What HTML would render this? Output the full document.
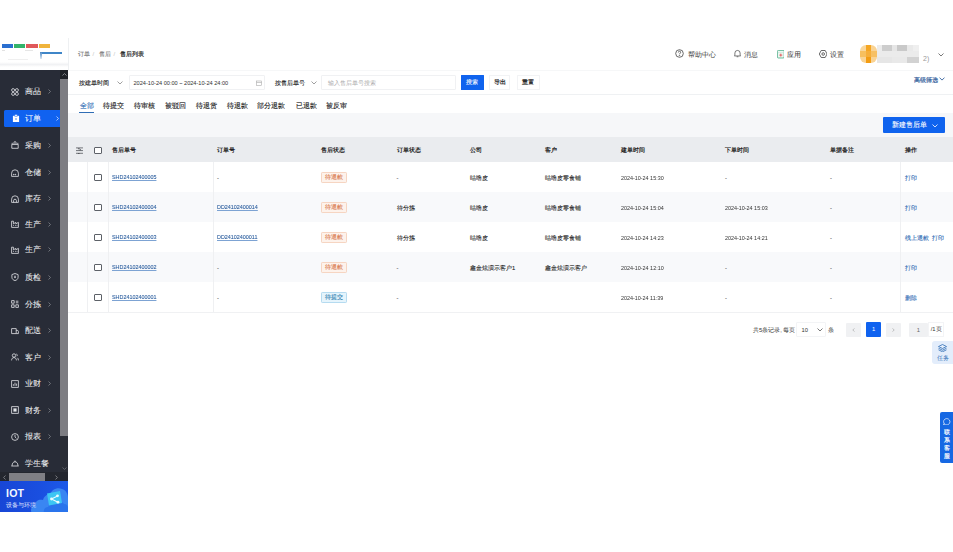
<!DOCTYPE html>
<html><head><meta charset="utf-8">
<style>
*{box-sizing:border-box;margin:0;padding:0}
html,body{width:953px;height:552px;overflow:hidden;background:#fff;font-family:"Liberation Sans",sans-serif;color:#333}
.a{position:absolute;white-space:nowrap}
#logo{left:0;top:38px;width:68.7px;height:32px;background:#fff;border-right:1px solid #eef0f2}
#side{left:0;top:70px;width:68px;height:442px;background:#282c37}
.mi{position:absolute;left:0;width:60px;height:17px;color:#eceef0;font-size:8.3px;line-height:17px;-webkit-text-stroke:.06px currentColor}
.mi .ic{position:absolute;left:11.2px;top:4.6px;width:8px;height:8px}
.mi .tx{position:absolute;left:25px;top:0}
.mi .ar{position:absolute;left:47.5px;top:6.2px;width:3px;height:5px}
.mi.on{left:4.3px;width:55.7px;background:#1062f0;color:#fff;border-radius:1.5px 0 0 1.5px}
.mi.on .ic{left:7.8px;top:4.6px}
.mi.on .tx{left:21px}
.mi.on .ar{left:51.5px;top:6.5px}
#vs{left:60px;top:70px;width:8px;height:402px;background:#2a2d35}
#vthumb{left:60px;top:78.5px;width:8px;height:357.4px;background:#7d7d82}
#hs{left:0;top:472px;width:68px;height:8.5px;background:#23262e}
#hthumb{left:9px;top:473px;width:36px;height:7.5px;background:#7f7f84}
#iot{left:0;top:480.5px;width:68px;height:31.5px;background:linear-gradient(90deg,#1846d6,#1a4fe0 60%,#1d5ae8);overflow:hidden}
.hd{font-size:6.2px;color:#333}
.hr{font-size:6.9px;color:#333}
.sk{-webkit-text-stroke:.12px currentColor}
.bc{font-size:6px;color:#7a7a7a;-webkit-text-stroke:.1px currentColor}
.tab{position:absolute;top:101px;font-size:7px;color:#222;line-height:10px;-webkit-text-stroke:.12px currentColor}
.btn{position:absolute;top:75.2px;height:14.5px;font-size:6.2px;line-height:12.5px;text-align:center;border:1px solid #f2f3f5;background:#fff;color:#1a1a1a;border-radius:.5px;-webkit-text-stroke:.2px currentColor}
.th{position:absolute;top:146.1px;font-size:5.8px;font-weight:bold;color:#222;line-height:9px}
.cell{position:absolute;font-size:5.8px;color:#262626;line-height:9px;margin-top:-1px;-webkit-text-stroke:.1px currentColor}
.cell.lnk{font-size:6px;transform:scaleX(.9);transform-origin:0 50%;text-decoration-color:#7da3d3;margin-top:-1.2px}
.num{font-size:6px;transform:scaleX(.9);transform-origin:0 50%;margin-top:-1px;-webkit-text-stroke:0;color:#333}
.lnk{color:#2d5f9f;text-decoration:underline}
.tag{position:absolute;width:25.5px;height:11px;font-size:6px;line-height:9px;text-align:center;border:.8px solid;border-radius:1.2px;-webkit-text-stroke:.12px currentColor}
.tag.o{color:#d97a4e;border-color:#f6d5c2;background:#fdf2eb}
.tag.b{color:#2f7fb0;border-color:#b5dbf0;background:#e5f4fc}
.cb{position:absolute;left:94.2px;width:7.4px;height:7.4px;border:.8px solid #5d6168;border-radius:1px;background:#fff}
.act{color:#2f6db5}
</style></head><body>

<!-- logo -->
<div id="logo" class="a">
  <div class="a" style="left:2px;top:5.8px;width:11px;height:4.2px;background:#2a6fd0"></div>
  <div class="a" style="left:14px;top:5.8px;width:11px;height:4.2px;background:#33b36a"></div>
  <div class="a" style="left:26px;top:5.8px;width:11.5px;height:4.2px;background:#e0585a"></div>
  <div class="a" style="left:38.5px;top:5.8px;width:11.5px;height:4.2px;background:#f0b43c"></div>
  <div class="a" style="left:40px;top:14px;width:22px;height:1.5px;background:#3f86c8"></div>
  <div class="a" style="left:40px;top:14px;width:1.5px;height:7px;background:linear-gradient(#4a87c4,#dfe9f3)"></div>
  <div class="a" style="left:0;top:24px;width:68px;height:5px;background:linear-gradient(#fff,#f1f2f4 50%,#fff)"></div>
  <div class="a" style="left:2px;top:11.5px;width:3px;height:.6px;background:#e2e2e2"></div><div class="a" style="left:25px;top:11.8px;width:8px;height:.6px;background:#e6e6e6"></div><div class="a" style="left:8px;top:21px;width:20px;height:.6px;background:#efefef"></div>
</div>

<!-- sidebar -->
<div id="side" class="a">
</div>
<div class="a" style="left:0;top:70px;width:60px;height:402px">
  <div class="mi" style="top:13.3px"><svg class="ic" viewBox="0 0 8 8" fill="none" stroke="#e3e5e8" stroke-width="0.8"><circle cx="2.1" cy="2.1" r="1.5"/><circle cx="5.9" cy="2.1" r="1.5"/><circle cx="2.1" cy="5.9" r="1.5"/><circle cx="5.9" cy="5.9" r="1.5"/></svg><span class="tx">商品</span><svg class="ar" viewBox="0 0 3 5" fill="none" stroke="#8d9096" stroke-width=".7"><path d="M.5 .5l2 2-2 2"/></svg></div>
  <div class="mi on" style="top:39.5px"><svg class="ic" viewBox="0 0 8 8"><path d="M.9 1.8h6.2v6.2H.9z" fill="#fff"/><rect x="2.6" y=".6" width="2.8" height="1.8" rx=".4" fill="#fff" stroke="#1062f0" stroke-width=".5"/><circle cx="4" cy="5" r=".7" fill="#1062f0"/></svg><span class="tx">订单</span><svg class="ar" viewBox="0 0 3 5" fill="none" stroke="#e6eeff" stroke-width=".7"><path d="M.5 .5l2 2-2 2"/></svg></div>
  <div class="mi" style="top:66.5px"><svg class="ic" viewBox="0 0 8 8" fill="none" stroke="#e3e5e8" stroke-width="0.8"><path d="M.8 3.4h6.4v3.9H.8z M1.2 3.4V1.8 M6.8 3.4V1.8 M3 3.4V1.6a1 1 0 0 1 2 0v1.8"/></svg><span class="tx">采购</span><svg class="ar" viewBox="0 0 3 5" fill="none" stroke="#8d9096" stroke-width=".7"><path d="M.5 .5l2 2-2 2"/></svg></div>
  <div class="mi" style="top:94px"><svg class="ic" viewBox="0 0 8 8" fill="none" stroke="#e3e5e8" stroke-width="0.8"><path d="M.6 7.4V4.2a3.4 3.4 0 0 1 6.8 0v3.2z"/><circle cx="2.8" cy="5.6" r=".35" fill="#e3e5e8"/><circle cx="4.4" cy="5.6" r=".35" fill="#e3e5e8"/></svg><span class="tx">仓储</span><svg class="ar" viewBox="0 0 3 5" fill="none" stroke="#8d9096" stroke-width=".7"><path d="M.5 .5l2 2-2 2"/></svg></div>
  <div class="mi" style="top:120.3px"><svg class="ic" viewBox="0 0 8 8" fill="none" stroke="#e3e5e8" stroke-width="0.8"><path d="M.6 7.4V4.2a3.4 3.4 0 0 1 6.8 0v3.2z M2.6 7.4V5.6a1.4 1.4 0 0 1 2.8 0v1.8"/></svg><span class="tx">库存</span><svg class="ar" viewBox="0 0 3 5" fill="none" stroke="#8d9096" stroke-width=".7"><path d="M.5 .5l2 2-2 2"/></svg></div>
  <div class="mi" style="top:145.7px"><svg class="ic" viewBox="0 0 8 8" fill="none" stroke="#e3e5e8" stroke-width="0.8"><path d="M.6 7.4V1.2h1.8v2.6l2.4-1.4v1.4l2.6-1.4v5z M2.2 5.4h.8 M4 5.4h.8 M5.6 5.4h.8"/></svg><span class="tx">生产</span><svg class="ar" viewBox="0 0 3 5" fill="none" stroke="#8d9096" stroke-width=".7"><path d="M.5 .5l2 2-2 2"/></svg></div>
  <div class="mi" style="top:171.2px"><svg class="ic" viewBox="0 0 8 8" fill="none" stroke="#e3e5e8" stroke-width="0.8"><path d="M.6 7.4V1.2h1.8v2.6l2.4-1.4v1.4l2.6-1.4v5z M2.2 5.4h.8 M4 5.4h.8 M5.6 5.4h.8"/></svg><span class="tx">生产</span><svg class="ar" viewBox="0 0 3 5" fill="none" stroke="#8d9096" stroke-width=".7"><path d="M.5 .5l2 2-2 2"/></svg></div>
  <div class="mi" style="top:198.7px"><svg class="ic" viewBox="0 0 8 8" fill="none" stroke="#e3e5e8" stroke-width="0.8"><path d="M4 .5l3.1 1.1v2.6c0 1.9-1.4 2.9-3.1 3.4C2.3 7.1.9 6.1.9 4.2V1.6z M4 2.6v2.5 M3 4.1h2"/></svg><span class="tx">质检</span><svg class="ar" viewBox="0 0 3 5" fill="none" stroke="#8d9096" stroke-width=".7"><path d="M.5 .5l2 2-2 2"/></svg></div>
  <div class="mi" style="top:225.5px"><svg class="ic" viewBox="0 0 8 8" fill="none" stroke="#e3e5e8" stroke-width="0.8"><path d="M.6 .6h2.6v2.6H.6z M.6 4.8h2.6v2.6H.6z M4.8 4.8h2.6v2.6H4.8z M4.8 1.2h2.6 M4.8 2.8h2.6"/></svg><span class="tx">分拣</span><svg class="ar" viewBox="0 0 3 5" fill="none" stroke="#8d9096" stroke-width=".7"><path d="M.5 .5l2 2-2 2"/></svg></div>
  <div class="mi" style="top:252px"><svg class="ic" viewBox="0 0 8 8" fill="none" stroke="#e3e5e8" stroke-width="0.8"><path d="M.6 1.6h4.6v5H.6z M5.2 3.4h1.6l.6 1v2.2H5.2"/></svg><span class="tx">配送</span><svg class="ar" viewBox="0 0 3 5" fill="none" stroke="#8d9096" stroke-width=".7"><path d="M.5 .5l2 2-2 2"/></svg></div>
  <div class="mi" style="top:278.6px"><svg class="ic" viewBox="0 0 8 8" fill="none" stroke="#e3e5e8" stroke-width="0.8"><circle cx="3" cy="2.5" r="1.7"/><path d="M.6 7.4c0-1.8 1-2.8 2.4-2.8s2.4 1 2.4 2.8 M5.4 1c.9.3 1.2 1.5.5 2.2 M6.4 4.8c.6.5 1 1.3 1 2.6"/></svg><span class="tx">客户</span><svg class="ar" viewBox="0 0 3 5" fill="none" stroke="#8d9096" stroke-width=".7"><path d="M.5 .5l2 2-2 2"/></svg></div>
  <div class="mi" style="top:305px"><svg class="ic" viewBox="0 0 8 8" fill="none" stroke="#e3e5e8" stroke-width="0.8"><path d="M.6 .6h6.8v6.8H.6z M2.4 5.8V4.2 M4 5.8V2.6 M5.6 5.8V3.6"/></svg><span class="tx">业财</span><svg class="ar" viewBox="0 0 3 5" fill="none" stroke="#8d9096" stroke-width=".7"><path d="M.5 .5l2 2-2 2"/></svg></div>
  <div class="mi" style="top:331.5px"><svg class="ic" viewBox="0 0 8 8" fill="none" stroke="#e3e5e8" stroke-width="0.8"><path d="M.6 .6h6.8v6.8H.6z"/><rect x="2.4" y="2.4" width="3.2" height="3.2" fill="#e3e5e8" stroke="none"/></svg><span class="tx">财务</span><svg class="ar" viewBox="0 0 3 5" fill="none" stroke="#8d9096" stroke-width=".7"><path d="M.5 .5l2 2-2 2"/></svg></div>
  <div class="mi" style="top:358px"><svg class="ic" viewBox="0 0 8 8" fill="none" stroke="#e3e5e8" stroke-width="0.8"><circle cx="4" cy="4" r="3.4"/><path d="M4 1.9V4l1.4 1.3"/></svg><span class="tx">报表</span><svg class="ar" viewBox="0 0 3 5" fill="none" stroke="#8d9096" stroke-width=".7"><path d="M.5 .5l2 2-2 2"/></svg></div>
  <div class="mi" style="top:385.3px"><svg class="ic" viewBox="0 0 8 8" fill="none" stroke="#e3e5e8" stroke-width="0.8"><path d="M.3 6h7.4 M1.1 6V5.4C1.1 3.2 2.4 1.8 4 1.8s2.9 1.4 2.9 3.6V6 M3.3 1.2h1.4"/></svg><span class="tx">学生餐</span></div>
</div>
<div id="vs" class="a"></div>
<div id="vthumb" class="a"></div>
<div class="a" style="left:60px;top:70px;width:8px;height:8.5px;background:#1f2227"></div><svg class="a" style="left:61.5px;top:72.5px" width="5" height="3" viewBox="0 0 5 3" fill="none" stroke="#9a9ca0" stroke-width=".8"><path d="M.5 2.5L2.5 .6l2 1.9"/></svg>
<svg class="a" style="left:61.5px;top:467px" width="5" height="3" viewBox="0 0 5 3" fill="none" stroke="#6f7277" stroke-width=".8"><path d="M.5 .5l2 1.9 2-1.9"/></svg>
<div id="hs" class="a"></div>
<div id="hthumb" class="a"></div>
<svg class="a" style="left:3px;top:474.5px" width="3" height="5" viewBox="0 0 3 5" fill="none" stroke="#8a8c90" stroke-width=".8"><path d="M2.5 .5L.6 2.5l1.9 2"/></svg><svg class="a" style="left:55px;top:474.5px" width="3" height="5" viewBox="0 0 3 5" fill="none" stroke="#8a8c90" stroke-width=".8"><path d="M.5 .5l1.9 2-1.9 2"/></svg>
<div id="iot" class="a">
  <svg class="a" style="left:30px;top:2px" width="38" height="30" viewBox="0 0 38 30">
    <path d="M2 30c-2-2-1-7 3-8 0-4 4-6 8-5 1-4 4-6 7-5 1-5 7-8 12-6 4 1 6 5 6 9v15z" fill="#3a86f2"/>
    <path d="M14 30c-1-3 1-6 4-6 1-3 4-4 7-3 2-3 7-3 9 0 3 0 4 2 4 4v5z" fill="#2a74ec"/>
    <path d="M17 10.5l13-2.5 2 12-13 2.5z" fill="#3cc6f3"/>
    <path d="M21.5 16l6-3 M21.5 16l6.5 3.2" stroke="#eafcff" stroke-width="1.1" fill="none"/>
    <circle cx="21.5" cy="16" r="1.4" fill="#eafcff"/><circle cx="27.5" cy="12.8" r="1.4" fill="#eafcff"/><circle cx="28" cy="19.2" r="1.4" fill="#eafcff"/>
  </svg>
  <div class="a" style="left:6px;top:7.2px;font-size:10.6px;font-weight:bold;color:#f4f7ff;line-height:11px;letter-spacing:.2px">IOT</div>
  <div class="a" style="left:6.3px;top:21.3px;font-size:5.7px;color:#e0e8ff;line-height:7px">设备与环境</div>
</div>
</div>

<!-- header -->
<div class="a" style="left:68px;top:70px;width:885px;height:1px;background:#f6f7f8"></div>
<div class="a bc" style="left:78px;top:50px;line-height:8px">订单</div><div class="a bc" style="left:92.5px;top:50px;line-height:8px;color:#d0d0d0">/</div><div class="a bc" style="left:99px;top:50px;line-height:8px">售后</div><div class="a bc" style="left:113.5px;top:50px;line-height:8px;color:#d0d0d0">/</div><div class="a bc" style="left:119.5px;top:50px;line-height:8px;color:#1a1a1a;-webkit-text-stroke:.2px #1a1a1a">售后列表</div>

<svg class="a" style="left:675px;top:49.2px" width="9" height="9" viewBox="0 0 9 9" fill="none" stroke="#444" stroke-width="0.8"><circle cx="4.5" cy="4.5" r="3.8"/><path d="M3.3 3.5c0-.8.5-1.3 1.2-1.3s1.2.5 1.2 1.1c0 .9-1.2 1-1.2 1.9"/><circle cx="4.5" cy="6.5" r=".3"/></svg>
<div class="a hd hr" style="left:687.5px;top:51.2px;line-height:8px">帮助中心</div>
<svg class="a" style="left:734.3px;top:49.2px" width="7" height="9" viewBox="0 0 8 9" fill="none" stroke="#444" stroke-width="0.8"><path d="M1 6.5V4a3 3 0 0 1 6 0v2.5l.6.8H.4z M3 8.2h2"/></svg>
<div class="a hd hr" style="left:744px;top:51.2px;line-height:8px">消息</div>
<svg class="a" style="left:776.5px;top:50.2px" width="7.6" height="8.4" viewBox="0 0 7.6 8.4" fill="none"><rect x=".4" y=".4" width="6.8" height="7.6" rx="1" stroke="#3aa37a" stroke-width=".75" fill="#eef8f3"/><path d="M.8 2.6h6" stroke="#bfe3d1" stroke-width=".6"/><path d="M3.8 3.6v3M2.3 5.1h3" stroke="#e04848" stroke-width=".8"/></svg>
<div class="a hd hr" style="left:786.5px;top:51.2px;line-height:8px">应用</div>
<svg class="a" style="left:818.8px;top:50.2px" width="8.4" height="8" viewBox="0 0 8.4 8" fill="none" stroke="#444" stroke-width=".8"><path d="M2.2.5h4l1.9 3.5-1.9 3.5h-4L.3 4z"/><circle cx="4.2" cy="4" r="1.3"/></svg>
<div class="a hd hr" style="left:829.5px;top:51.2px;line-height:8px">设置</div>
<!-- avatar blur -->
<div class="a" style="left:859.8px;top:45.4px;width:17.4px;height:17.4px;border-radius:6px;overflow:hidden;filter:blur(.6px)"><div class="a" style="left:0.0px;top:0.0px;width:5.9px;height:5.9px;background:#f9d79c"></div><div class="a" style="left:5.8px;top:0.0px;width:5.9px;height:5.9px;background:#f5a623"></div><div class="a" style="left:11.6px;top:0.0px;width:5.9px;height:5.9px;background:#f9d394"></div><div class="a" style="left:0.0px;top:5.8px;width:5.9px;height:5.9px;background:#f7bf5e"></div><div class="a" style="left:5.8px;top:5.8px;width:5.9px;height:5.9px;background:#f6ae3a"></div><div class="a" style="left:11.6px;top:5.8px;width:5.9px;height:5.9px;background:#f7c063"></div><div class="a" style="left:0.0px;top:11.6px;width:5.9px;height:5.9px;background:#f9d394"></div><div class="a" style="left:5.8px;top:11.6px;width:5.9px;height:5.9px;background:#f39c12"></div><div class="a" style="left:11.6px;top:11.6px;width:5.9px;height:5.9px;background:#f9d394"></div></div>
<div class="a" style="left:877px;top:45.4px;width:42px;height:17.4px;filter:blur(.6px)"><div class="a" style="left:0px;top:0.0px;width:5.1px;height:5.9px;background:#ececec"></div><div class="a" style="left:5px;top:0.0px;width:10.1px;height:5.9px;background:#cdcdcd"></div><div class="a" style="left:15px;top:0.0px;width:5.1px;height:5.9px;background:#e6e6e6"></div><div class="a" style="left:20px;top:0.0px;width:10.1px;height:5.9px;background:#c9c9c9"></div><div class="a" style="left:30px;top:0.0px;width:6.1px;height:5.9px;background:#e9e9e9"></div><div class="a" style="left:36px;top:0.0px;width:6.1px;height:5.9px;background:#efefef"></div><div class="a" style="left:0px;top:5.8px;width:42.1px;height:5.9px;background:#ebebeb"></div><div class="a" style="left:0px;top:11.6px;width:15.1px;height:5.9px;background:#e6e6e6"></div><div class="a" style="left:15px;top:11.6px;width:15.1px;height:5.9px;background:#e9e9e9"></div><div class="a" style="left:30px;top:11.6px;width:12.1px;height:5.9px;background:#d2d2d2"></div></div>
<div class="a" style="left:923px;top:55px;font-size:7px;line-height:8px;color:#9a9a9a;transform:scale(1);">2)</div>
<svg class="a" style="left:937.5px;top:53px" width="6" height="4" viewBox="0 0 6 4" fill="none" stroke="#555" stroke-width=".8"><path d="M.5 .5L3 3l2.5-2.5"/></svg>

<!-- filter row -->
<div class="a hd sk" style="left:78.5px;top:79px;line-height:8px;color:#1a1a1a">按建单时间</div>
<svg class="a" style="left:116.5px;top:81px" width="6" height="4" viewBox="0 0 6 4" fill="none" stroke="#777" stroke-width=".7"><path d="M.5 .5L3 3l2.5-2.5"/></svg>
<div class="a" style="left:128.5px;top:75.2px;width:136px;height:14.5px;border:1px solid #f0f1f3;border-radius:1px"></div>
<div class="a hd" style="left:133.5px;top:79px;line-height:8px;font-size:5.6px;color:#333">2024-10-24 00:00 ~ 2024-10-24 24:00</div>
<svg class="a" style="left:255.5px;top:80px" width="6" height="6" viewBox="0 0 6 6" fill="none" stroke="#aaa" stroke-width=".6"><rect x=".5" y="1" width="5" height="4.5"/><path d="M.5 2.5h5"/></svg>
<div class="a hd sk" style="left:275px;top:79px;line-height:8px;color:#1a1a1a">按售后单号</div>
<svg class="a" style="left:310.5px;top:81px" width="6" height="4" viewBox="0 0 6 4" fill="none" stroke="#777" stroke-width=".7"><path d="M.5 .5L3 3l2.5-2.5"/></svg>
<div class="a" style="left:321px;top:75.2px;width:135px;height:14.5px;border:1px solid #f0f1f3;border-radius:1px"></div>
<div class="a hd" style="left:327.5px;top:79px;line-height:8px;color:#aaa">输入售后单号搜索</div>
<div class="btn" style="left:461px;width:22.5px;background:#0f63ee;border-color:#0f63ee;color:#fff;-webkit-text-stroke:.1px #fff">搜索</div>
<div class="btn" style="left:489px;width:21px">导出</div>
<div class="btn" style="left:516.5px;width:23.5px">重置</div>
<div class="a" style="left:913.5px;top:75.6px;font-size:6px;color:#34619c;line-height:8px;-webkit-text-stroke:.2px currentColor">高级筛选</div>
<svg class="a" style="left:939.3px;top:76.8px" width="6" height="4.2" viewBox="0 0 6 4" fill="none" stroke="#34619c" stroke-width=".9"><path d="M.5 .5L3 3l2.5-2.5"/></svg>
<div class="a" style="left:68px;top:94px;width:885px;height:1px;background:#eff1f3"></div>

<!-- tabs -->
<div class="tab" style="left:79.5px;color:#2f6db5">全部</div>
<div class="a" style="left:79px;top:111.5px;width:15px;height:1.5px;background:#2f6db5"></div>
<div class="tab" style="left:103.3px">待提交</div>
<div class="tab" style="left:134px">待审核</div>
<div class="tab" style="left:165px">被驳回</div>
<div class="tab" style="left:195.5px">待退货</div>
<div class="tab" style="left:226.7px">待退款</div>
<div class="tab" style="left:257.4px">部分退款</div>
<div class="tab" style="left:295.6px">已退款</div>
<div class="tab" style="left:326px">被反审</div>

<!-- content bg -->
<div class="a" style="left:68px;top:113px;width:885px;height:24px;background:#f6f7f9"></div>
<div class="a sk" style="left:883.2px;top:117.4px;width:61.6px;height:15.8px;background:#0f63ee;border-radius:1px;color:#fff;font-size:6.5px;line-height:15.8px;padding-left:8.6px;-webkit-text-stroke:.1px #fff">新建售后单</div>
<svg class="a" style="left:931.5px;top:123.6px" width="6" height="4" viewBox="0 0 6 4" fill="none" stroke="#fff" stroke-width=".8"><path d="M.5 .5L3 3l2.5-2.5"/></svg>

<!-- table -->
<div class="a" style="left:68px;top:137.2px;width:885px;height:25.2px;background:#eaecef"></div>
<div class="a" style="left:68px;top:192.3px;width:885px;height:29.9px;background:#f8f9fb"></div>
<div class="a" style="left:68px;top:252px;width:885px;height:29.8px;background:#f8f9fb"></div>
<div class="a" style="left:68px;top:311.5px;width:885px;height:1px;background:#f0f1f3"></div>
<!-- col borders -->
<div class="a" style="left:87px;top:162.4px;width:1px;height:149.6px;background:#eff0f2"></div>
<div class="a" style="left:107.5px;top:162.4px;width:1px;height:149.6px;background:#eff0f2"></div>
<div class="a" style="left:212.5px;top:162.4px;width:1px;height:149.6px;background:#eff0f2"></div>
<div class="a" style="left:900px;top:162.4px;width:1px;height:149.6px;background:#eff0f2"></div>

<svg class="a" style="left:75.8px;top:146.8px" width="7" height="7.2" viewBox="0 0 7 7.2"><path d="M0 .9h7M0 3.6h7M0 6.3h7" stroke="#4a4d52" stroke-width=".75"/><path d="M1.6 1.2h2.4l-1.2 1.3z M3 3.3h2.4l-1.2-1.3z M1.6 6h2.4l-1.2 1.2z" fill="#4a4d52"/></svg>
<div class="cb" style="top:147px"></div>
<div class="th" style="left:112px">售后单号</div>
<div class="th" style="left:217px">订单号</div>
<div class="th" style="left:321px">售后状态</div>
<div class="th" style="left:396.5px">订单状态</div>
<div class="th" style="left:470px">公司</div>
<div class="th" style="left:545px">客户</div>
<div class="th" style="left:621px">建单时间</div>
<div class="th" style="left:725px">下单时间</div>
<div class="th" style="left:829.5px">单据备注</div>
<div class="th" style="left:905px">操作</div>

<!-- rows -->
<div class="cb" style="top:173.75px"></div>
<div class="cell lnk" style="left:112px;top:174.5px">SHD24102400005</div>
<div class="cell" style="left:217px;top:174.5px">-</div>
<div class="tag o" style="left:321.3px;top:171.9px">待退款</div>
<div class="cell" style="left:396.5px;top:174.5px">-</div>
<div class="cell" style="left:470px;top:174.5px">咕噜皮</div>
<div class="cell" style="left:545px;top:174.5px">咕噜皮零食铺</div>
<div class="cell num" style="left:621px;top:174.5px">2024-10-24 15:30</div>
<div class="cell" style="left:725px;top:174.5px">-</div>
<div class="cell" style="left:830px;top:174.5px">-</div>
<div class="cell act" style="left:905px;top:174.5px">打印</div>
<div class="cb" style="top:203.75px"></div>
<div class="cell lnk" style="left:112px;top:204.5px">SHD24102400004</div>
<div class="cell lnk" style="left:217px;top:204.5px">DD24102400014</div>
<div class="tag o" style="left:321.3px;top:201.9px">待退款</div>
<div class="cell" style="left:396.5px;top:204.5px">待分拣</div>
<div class="cell" style="left:470px;top:204.5px">咕噜皮</div>
<div class="cell" style="left:545px;top:204.5px">咕噜皮零食铺</div>
<div class="cell num" style="left:621px;top:204.5px">2024-10-24 15:04</div>
<div class="cell num" style="left:725px;top:204.5px">2024-10-24 15:03</div>
<div class="cell" style="left:830px;top:204.5px">-</div>
<div class="cell act" style="left:905px;top:204.5px">打印</div>
<div class="cb" style="top:233.75px"></div>
<div class="cell lnk" style="left:112px;top:234.5px">SHD24102400003</div>
<div class="cell lnk" style="left:217px;top:234.5px">DD24102400011</div>
<div class="tag o" style="left:321.3px;top:231.9px">待退款</div>
<div class="cell" style="left:396.5px;top:234.5px">待分拣</div>
<div class="cell" style="left:470px;top:234.5px">咕噜皮</div>
<div class="cell" style="left:545px;top:234.5px">咕噜皮零食铺</div>
<div class="cell num" style="left:621px;top:234.5px">2024-10-24 14:23</div>
<div class="cell num" style="left:725px;top:234.5px">2024-10-24 14:21</div>
<div class="cell" style="left:830px;top:234.5px">-</div>
<div class="cell act" style="left:905px;top:234.5px">线上退款&nbsp;&nbsp;打印</div>
<div class="cb" style="top:263.75px"></div>
<div class="cell lnk" style="left:112px;top:264.5px">SHD24102400002</div>
<div class="cell" style="left:217px;top:264.5px">-</div>
<div class="tag o" style="left:321.3px;top:261.9px">待退款</div>
<div class="cell" style="left:396.5px;top:264.5px">-</div>
<div class="cell" style="left:470px;top:264.5px">鑫金炫演示客户1</div>
<div class="cell" style="left:545px;top:264.5px">鑫金炫演示客户</div>
<div class="cell num" style="left:621px;top:264.5px">2024-10-24 12:10</div>
<div class="cell" style="left:725px;top:264.5px">-</div>
<div class="cell" style="left:830px;top:264.5px">-</div>
<div class="cell act" style="left:905px;top:264.5px">打印</div>
<div class="cb" style="top:293.75px"></div>
<div class="cell lnk" style="left:112px;top:294.5px">SHD24102400001</div>
<div class="cell" style="left:217px;top:294.5px">-</div>
<div class="tag b" style="left:321.3px;top:291.9px">待提交</div>
<div class="cell" style="left:396.5px;top:294.5px">-</div>
<div class="cell" style="left:470px;top:294.5px"></div>
<div class="cell" style="left:545px;top:294.5px"></div>
<div class="cell num" style="left:621px;top:294.5px">2024-10-24 11:39</div>
<div class="cell" style="left:725px;top:294.5px">-</div>
<div class="cell" style="left:830px;top:294.5px">-</div>
<div class="cell act" style="left:905px;top:294.5px">删除</div>
<!-- pagination -->
<div class="a" style="left:753px;top:326px;font-size:5.8px;line-height:8px;color:#333">共5条记录, 每页</div>
<div class="a" style="left:796.3px;top:322.3px;width:29.7px;height:14.7px;border:1px solid #f3f4f6;border-radius:1px"></div>
<div class="a" style="left:801.5px;top:326px;font-size:5.8px;line-height:8px;color:#333">10</div>
<svg class="a" style="left:817px;top:328px" width="6" height="4" viewBox="0 0 6 4" fill="none" stroke="#555" stroke-width=".8"><path d="M.5 .5L3 3l2.5-2.5"/></svg>
<div class="a" style="left:827.5px;top:326px;font-size:5.8px;line-height:8px;color:#333">条</div>
<div class="a" style="left:846px;top:322.5px;width:14.5px;height:14.5px;background:#f0f1f3;border-radius:1px;color:#aaa;font-size:6px;line-height:14.5px;text-align:center"><svg style="position:absolute;left:6px;top:5.5px" width="3" height="4" viewBox="0 0 3 4" fill="none" stroke="#999" stroke-width=".6"><path d="M2.4 .4L.8 2l1.6 1.6"/></svg></div>
<div class="a" style="left:866.2px;top:322.3px;width:14.7px;height:14.7px;background:#0f62ef;border-radius:1px;color:#fff;font-size:5.8px;line-height:14.5px;text-align:center">1</div>
<div class="a" style="left:886px;top:322.5px;width:14.5px;height:14.5px;background:#f0f1f3;border-radius:1px;color:#aaa;font-size:6px;line-height:14.5px;text-align:center"><svg style="position:absolute;left:6px;top:5.5px" width="3" height="4" viewBox="0 0 3 4" fill="none" stroke="#999" stroke-width=".6"><path d="M.6 .4L2.2 2 .6 3.6"/></svg></div>
<div class="a" style="left:908.5px;top:322.5px;width:19.5px;height:14.5px;background:#f0f1f3;border-radius:1px;color:#666;font-size:5.8px;line-height:14.5px;text-align:center">1</div>
<div class="a" style="left:927.8px;top:322.3px;width:16.7px;height:14.7px;border:1px solid #f3f4f6;color:#333;font-size:5.8px;line-height:12.5px;text-align:center">/1页</div>
<!-- floating -->
<div class="a" style="left:931.5px;top:341px;width:24px;height:23px;background:#e3edfb;border-radius:3px"></div>
<svg class="a" style="left:937.5px;top:343.5px" width="9" height="8" viewBox="0 0 9 8" fill="none" stroke="#2f6db5" stroke-width=".8"><path d="M4.5 .5l4 2-4 2-4-2z M.5 4.2l4 2 4-2 M.5 5.8l4 2 4-2"/></svg>
<div class="a" style="left:936.8px;top:354px;font-size:5.8px;line-height:8px;color:#2f6db5">任务</div>
<div class="a" style="left:939.5px;top:411.5px;width:14px;height:51.5px;background:#1668e3;border-radius:2px 0 0 2px"></div>
<svg class="a" style="left:943px;top:417.5px" width="7.5" height="7.5" viewBox="0 0 8 8" fill="none" stroke="#fff" stroke-width=".7"><path d="M4 .6a3.4 3.4 0 1 1-2.6 5.6L.8 7.4l.3-1.6A3.4 3.4 0 0 1 4 .6z"/></svg>
<div class="a" style="left:943.8px;top:427.5px;width:6.5px;font-size:6.2px;line-height:8.2px;color:#fff;white-space:normal;-webkit-text-stroke:.2px #fff">联系客服</div>

</body></html>
